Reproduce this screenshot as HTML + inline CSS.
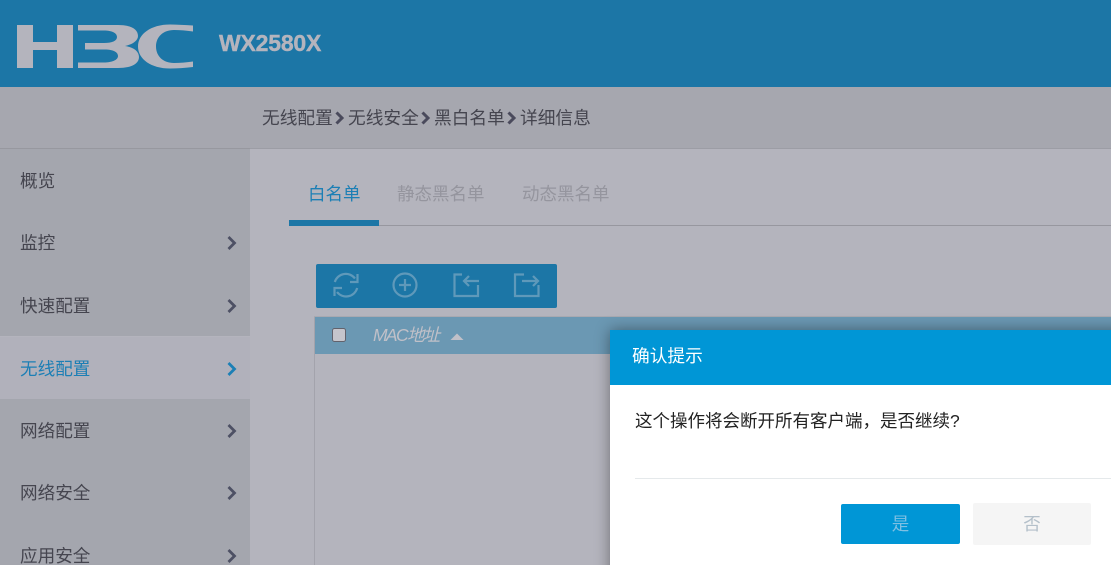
<!DOCTYPE html>
<html lang="zh">
<head>
<meta charset="utf-8">
<style>
html,body{margin:0;padding:0;width:1111px;height:565px;overflow:hidden;background:#b4b4bd}
body{position:relative;font-family:"Liberation Sans","Noto Sans CJK SC",sans-serif;font-size:17.5px;color:#45454f}
div,span,svg{position:absolute}
.t{white-space:nowrap;line-height:24px}
.row{left:0;width:250px;height:62.4px;background:#a4a6ae}
.row .t{left:20px;top:20px;font-size:17.6px}
.row svg{left:226px;top:24px}
.bc{top:106px;font-size:17.7px}
</style>
</head>
<body>
<div style="left:0;top:0;width:1111px;height:87px;background:#1c76a6"></div>
<svg style="left:0;top:0" width="340" height="87" viewBox="0 0 340 87">
<path fill="#b4b4bd" d="M17 25H33V42H57V25H73V68H57V50H33V68H17Z"/>
<path fill="#b4b4bd" d="M78 25H118C131 25 138 29 138 36C138 41 132 44.500 125 46C133 47 139 51 139 57C139 64 131 68 118 68H78V62.500H104C112 62.500 118 60 118 56C118 52 113 49.500 105 49.500H85V43H104C112 43 117 41 117 37C117 33 112 30.500 104 30.500H78Z"/>
<path fill="#b4b4bd" d="M193 25.500V31.500C186 30.500 180 30 174 30C163 30 156 37 156 46.500C156 56 163 63 174 63C180 63 186 62.500 193 61.500V67C185 68 177 68.500 170 68.500C151 68.500 138 59 138 46.500C138 34 151 24.500 170 24.500C177 24.500 185 25 193 25.500Z"/>
</svg>
<div class="t" style="left:219px;top:31px;font-size:23px;font-weight:bold;color:#b4b4bd;letter-spacing:-.2px;-webkit-text-stroke:.4px #b4b4bd">WX2580X</div>

<div style="left:0;top:87px;width:1111px;height:61px;background:#a6a7af"></div>
<div style="left:250px;top:148px;width:861px;height:1px;background:#9c9da5"></div>
<div style="left:0;top:148px;width:250px;height:1px;background:#97989f"></div>
<div class="t bc" style="left:262px">无线配置</div>
<svg style="left:334px;top:111px" width="11" height="14" viewBox="0 0 11 14"><path d="M2.500 1.500L8 7L2.500 12.500" fill="none" stroke="#4a4a5c" stroke-width="3"/></svg>
<div class="t bc" style="left:348px">无线安全</div>
<svg style="left:420px;top:111px" width="11" height="14" viewBox="0 0 11 14"><path d="M2.500 1.500L8 7L2.500 12.500" fill="none" stroke="#4a4a5c" stroke-width="3"/></svg>
<div class="t bc" style="left:434px">黑白名单</div>
<svg style="left:506px;top:111px" width="11" height="14" viewBox="0 0 11 14"><path d="M2.500 1.500L8 7L2.500 12.500" fill="none" stroke="#4a4a5c" stroke-width="3"/></svg>
<div class="t bc" style="left:520px">详细信息</div>

<div class="row" style="top:149px"><span class="t">概览</span></div>
<div class="row" style="top:211.400px"><span class="t">监控</span><svg width="12" height="16" viewBox="0 0 12 16"><path d="M2.500 2L8.500 8L2.500 14" fill="none" stroke="#4d5064" stroke-width="2.800"/></svg></div>
<div class="row" style="top:273.800px"><span class="t">快速配置</span><svg width="12" height="16" viewBox="0 0 12 16"><path d="M2.500 2L8.500 8L2.500 14" fill="none" stroke="#4d5064" stroke-width="2.800"/></svg></div>
<div class="row" style="top:337px;background:#b1b1bb;height:62px"><span class="t" style="color:#1c7fb5">无线配置</span><svg width="12" height="16" viewBox="0 0 12 16"><path d="M2.500 2L8.500 8L2.500 14" fill="none" stroke="#1c7fb5" stroke-width="2.800"/></svg></div>
<div class="row" style="top:399px"><span class="t">网络配置</span><svg width="12" height="16" viewBox="0 0 12 16"><path d="M2.500 2L8.500 8L2.500 14" fill="none" stroke="#4d5064" stroke-width="2.800"/></svg></div>
<div class="row" style="top:461.400px"><span class="t">网络安全</span><svg width="12" height="16" viewBox="0 0 12 16"><path d="M2.500 2L8.500 8L2.500 14" fill="none" stroke="#4d5064" stroke-width="2.800"/></svg></div>
<div class="row" style="top:523.800px"><span class="t">应用安全</span><svg width="12" height="16" viewBox="0 0 12 16"><path d="M2.500 2L8.500 8L2.500 14" fill="none" stroke="#4d5064" stroke-width="2.800"/></svg></div>

<div class="t" style="left:308px;top:182px;color:#1c7fb5">白名单</div>
<div class="t" style="left:397px;top:182px;color:#95959e">静态黑名单</div>
<div class="t" style="left:522px;top:182px;color:#95959e">动态黑名单</div>
<div style="left:289px;top:225px;width:822px;height:1px;background:#97979f"></div>
<div style="left:289px;top:220px;width:90px;height:6px;background:#1c76a6"></div>

<div style="left:316px;top:264px;width:241px;height:44px;background:#1c76a6;border-radius:2px"></div>
<svg style="left:316px;top:264px" width="241" height="44" viewBox="0 0 241 44" fill="none" stroke="#5f99ba" stroke-width="2.200">
<path d="M18.800 18A11.500 11.500 0 0 1 39 14.500"/>
<path d="M41.500 10V18H34"/>
<path d="M41.200 24A11.500 11.500 0 0 1 21 28"/>
<path d="M18.500 32V24H26"/>
<circle cx="89" cy="21" r="11.500"/>
<path d="M83 21H95M89 15V27"/>
<path d="M146 10.500H138.500V32H162V21"/>
<path d="M163 17H148M153 12L148 17L153 22"/>
<path d="M208 10.500H199V32H222.500V21"/>
<path d="M206 17H222M217 12L222 17L217 22"/>
</svg>

<div style="left:314px;top:316px;width:797px;height:249px;border-left:1px solid #a3a3ac;box-sizing:border-box"></div>
<div style="left:315px;top:317px;width:796px;height:37px;background:#6b98b3"></div>
<div style="left:314px;top:316px;width:797px;height:1px;background:#a8a9b1"></div>
<div style="left:332px;top:328px;width:12px;height:12px;background:#c5c5cc;border:1.500px solid #62626c;border-radius:2.500px"></div>
<div class="t" style="left:373px;top:323px;font-style:italic;color:#c0c0c8;letter-spacing:-1.650px">MAC地址</div>
<svg style="left:450px;top:333px" width="14" height="8" viewBox="0 0 14 8"><path d="M7 .5L13.500 7H.5Z" fill="#c0c0c8"/></svg>

<div style="left:610px;top:330px;width:520px;height:260px;background:#fff;box-shadow:0 0 14px rgba(0,0,0,.4)"></div>
<div style="left:610px;top:330px;width:501px;height:55px;background:#0096d6"></div>
<div class="t" style="left:632px;top:344px;color:#fff;font-size:17.7px">确认提示</div>
<div class="t" style="left:635px;top:409px;color:#222">这个操作将会断开所有客户端，是否继续?</div>
<div style="left:635px;top:478px;width:476px;height:1px;background:#e5e9eb"></div>
<div style="left:841px;top:504px;width:119px;height:40px;background:#0096d6;border-radius:2px"></div>
<div class="t" style="left:841px;top:512px;width:119px;text-align:center;color:#7fc0e3">是</div>
<div style="left:973px;top:503px;width:118px;height:42px;background:#f5f5f5;border-radius:2px"></div>
<div class="t" style="left:973px;top:512px;width:118px;text-align:center;color:#b4c0ca">否</div>
</body>
</html>
